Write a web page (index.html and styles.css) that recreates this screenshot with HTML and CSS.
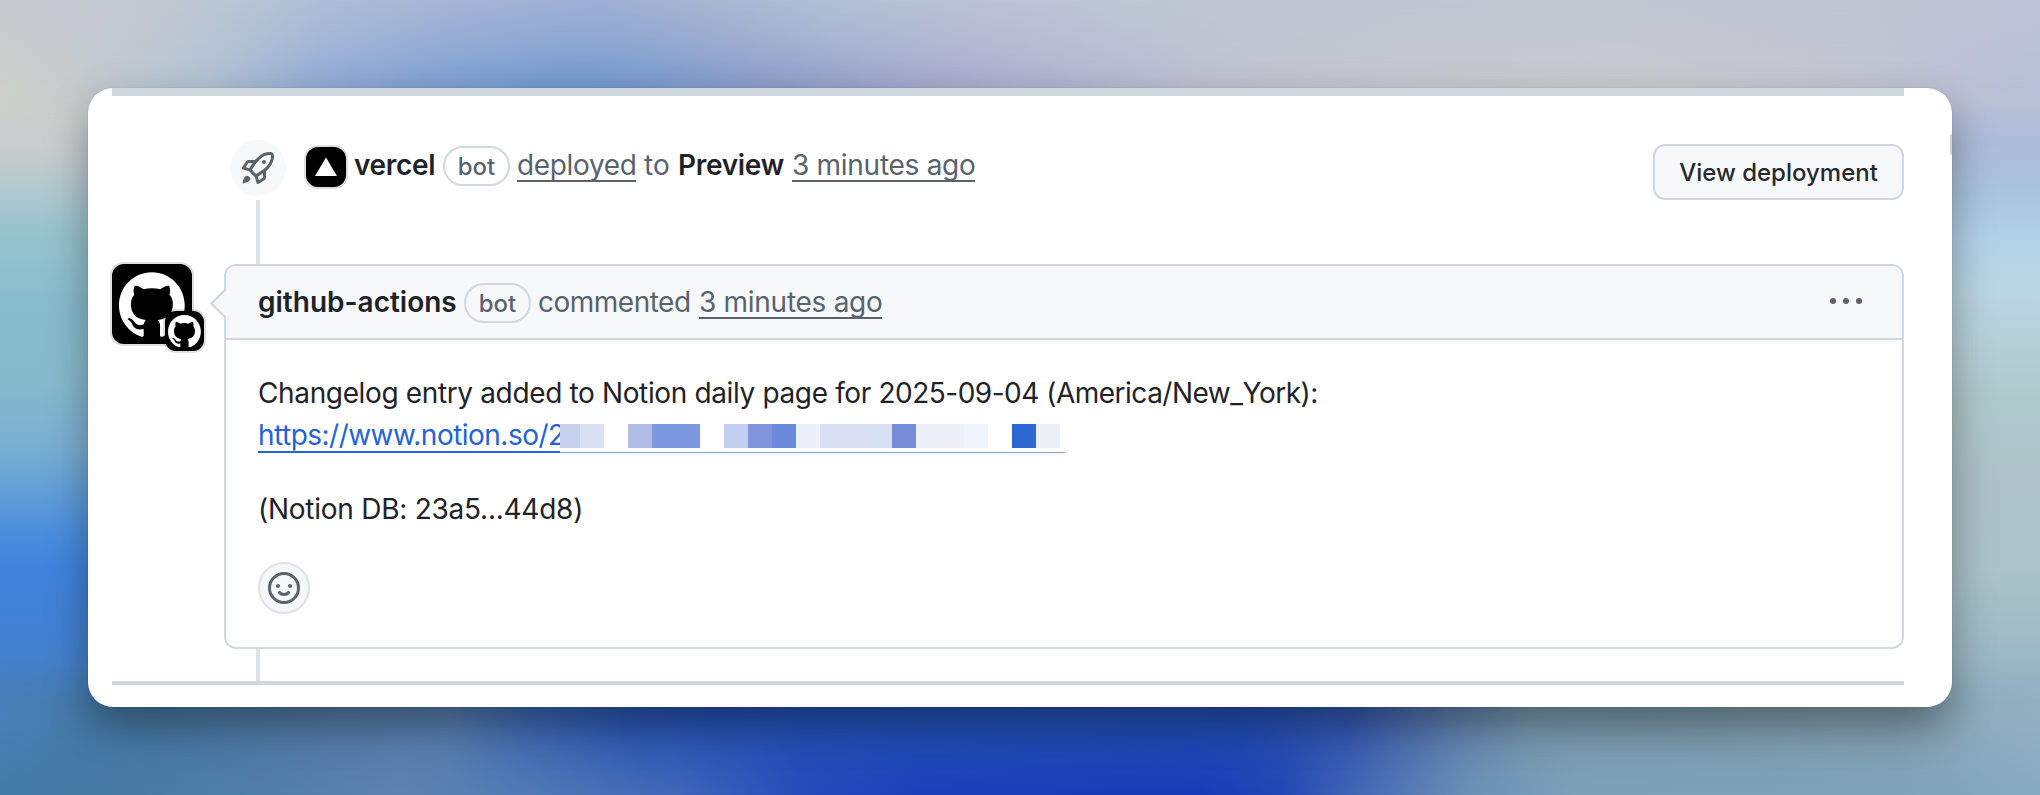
FILE: index.html
```html
<!DOCTYPE html>
<html lang="en">
<head>
<meta charset="utf-8">
<title>Deployment activity</title>
<link rel="stylesheet" href="styles.css">
</head>
<body>
<svg class="defs" width="0" height="0" aria-hidden="true">
  <symbol id="mark" viewBox="0 0 98 96"><path d="M48.854 0C21.839 0 0 22 0 49.217c0 21.756 13.993 40.172 33.405 46.69 2.427.49 3.316-1.059 3.316-2.362 0-1.141-.08-5.052-.08-9.127-13.59 2.934-16.42-5.867-16.42-5.867-2.184-5.704-5.42-7.17-5.42-7.17-4.448-3.015.324-3.015.324-3.015 4.934.326 7.523 5.052 7.523 5.052 4.367 7.496 11.404 5.378 14.235 4.074.404-3.178 1.699-5.378 3.074-6.6-10.839-1.141-22.243-5.378-22.243-24.283 0-5.378 1.94-9.778 5.014-13.2-.485-1.222-2.184-6.275.486-13.038 0 0 4.125-1.304 13.426 5.052a46.97 46.97 0 0 1 12.214-1.63c4.125 0 8.33.571 12.213 1.63 9.302-6.356 13.427-5.052 13.427-5.052 2.67 6.763.97 11.816.485 13.038 3.155 3.422 5.015 7.822 5.015 13.2 0 18.905-11.404 23.06-22.324 24.283 1.78 1.548 3.316 4.481 3.316 9.126 0 6.6-.08 11.897-.08 13.526 0 1.304.89 2.853 3.316 2.364 19.412-6.52 33.405-24.935 33.405-46.691C97.707 22 75.788 0 48.854 0z"/></symbol>
</svg>
<div class="wallpaper">
  <div class="side side-left"></div>
  <div class="side side-right"></div>
  <div class="edge edge-top"></div>
  <div class="edge edge-top-inner"></div>
  <div class="edge edge-bottom"></div>
  <div class="edge edge-bottom-outer"></div>
</div>
<main class="card">
  <div class="rule rule-top"></div>
  <section class="event">
    <div class="badge">
      <svg width="32" height="32" viewBox="0 0 16 16"><path d="M14.064 0h.186C15.216 0 16 .784 16 1.75v.186a8.752 8.752 0 0 1-2.564 6.186l-.458.459c-.314.314-.641.616-.979.904v3.207c0 .608-.315 1.172-.833 1.49l-2.774 1.707a.749.749 0 0 1-1.11-.418l-.954-3.102a1.214 1.214 0 0 1-.145-.125L3.754 9.816a1.218 1.218 0 0 1-.124-.145L.528 8.717a.749.749 0 0 1-.418-1.11l1.71-2.774A1.748 1.748 0 0 1 3.31 4h3.204c.288-.338.59-.665.904-.979l.459-.458A8.749 8.749 0 0 1 14.064 0ZM8.938 3.623h-.002l-.458.458c-.76.76-1.437 1.598-2.02 2.5l-1.5 2.317 2.143 2.143 2.317-1.5c.902-.583 1.74-1.26 2.499-2.02l.459-.458a7.25 7.25 0 0 0 2.123-5.127V1.75a.25.25 0 0 0-.25-.25h-.186a7.249 7.249 0 0 0-5.125 2.123ZM3.56 14.56c-.732.732-2.334 1.045-3.005 1.148a.234.234 0 0 1-.201-.064.234.234 0 0 1-.064-.201c.103-.671.416-2.273 1.15-3.003a1.502 1.502 0 1 1 2.12 2.12Zm6.94-3.935c-.088.06-.177.118-.266.175l-2.35 1.521.548 1.783 1.949-1.2a.25.25 0 0 0 .119-.213ZM3.678 8.116 5.2 5.766c.058-.09.117-.178.176-.266H3.309a.25.25 0 0 0-.213.119l-1.2 1.95ZM12 5a1 1 0 1 1-2 0 1 1 0 0 1 2 0Z"/></svg>
    </div>
    <div class="event-line">
      <span class="vercel"><svg width="40" height="40" viewBox="0 0 40 40"><path d="M20 10.5 31 29H9Z"/></svg></span>
      <b class="w-vercel">vercel</b>
      <span class="pill">bot</span>
      <a class="ul w-deployed">deployed</a>
      <span class="w-to">to</span>
      <b class="w-preview">Preview</b>
      <a class="ul w-ago">3 minutes ago</a>
    </div>
    <button class="btn">View deployment</button>
  </section>
  <div class="stem stem-top"></div>
  <section class="comment-row">
    <div class="avatar">
      <svg class="avatar-mark" width="66" height="65"><use href="#mark"/></svg>
      <div class="avatar-small"><svg width="33" height="32.5"><use href="#mark"/></svg></div>
    </div>
    <article class="comment">
      <svg class="caret" width="17" height="32" viewBox="0 0 17 32"><path class="caret-fill" d="M17 1 2 16l15 15Z"/><path class="caret-line" d="M15.5 1.5 1.5 15.5l14 14"/></svg>
      <header class="comment-head">
        <b class="w-actions">github-actions</b>
        <span class="pill">bot</span>
        <span class="w-commented">commented</span>
        <a class="ul w-ago">3 minutes ago</a>
        <svg class="kebab" width="32" height="32" viewBox="0 0 32 32"><circle cx="3" cy="16" r="3"/><circle cx="16" cy="16" r="3"/><circle cx="29" cy="16" r="3"/></svg>
      </header>
      <div class="comment-body">
        <p class="t-line">Changelog entry added to Notion daily page for <span class="t-date">2025-09-04 (America/New_York):</span></p>
        <p class="link-line"><a class="link">https://www.notion.so/2</a><span class="mosaic"><i class="m1"></i><i class="m2"></i><i></i><i class="m3"></i><i class="m4"></i><i class="m4"></i><i></i><i class="m5"></i><i class="m6"></i><i class="m7"></i><i class="m8"></i><i class="m9"></i><i class="m9"></i><i class="m10"></i><i class="m11"></i><i class="m12"></i><i class="m12"></i><i class="m13"></i><i></i><i class="m14"></i><i class="m15"></i></span></p>
        <p class="t-db">(Notion DB: 23a5...44d8)</p>
        <div class="react"><svg width="32" height="32" viewBox="0 0 16 16"><circle class="face" cx="8" cy="8" r="7.25"/><circle cx="5" cy="7" r="1"/><circle cx="11" cy="7" r="1"/><path class="smile" d="M5.75 10.25c1 1.35 3.5 1.35 4.5 0"/></svg></div>
      </div>
    </article>
  </section>
  <div class="stem stem-bottom"></div>
  <div class="rule rule-bottom"></div>
  <div class="nub"></div>
</main>
</body>
</html>
```
FILE: styles.css
```css
* { box-sizing: border-box; }
html { height: 795px; overflow: hidden; }
body {
  margin: 0; width: 2040px; height: 795px; overflow: hidden; position: relative;
  padding: 88px; font-family: Inter, "Liberation Sans", sans-serif; font-size: 28px; color: #1f2328;
}
.defs { position: absolute; }
p { margin: 0; }

/* wallpaper: blurred colour fields around the card */
.wallpaper { position: absolute; inset: 0; overflow: hidden; }
.side { position: absolute; top: 0; bottom: 0; width: 1020px; }
.side-left {
  left: 0;
  background: linear-gradient(180deg, #c9cccf 0, #cfcfcd 100px, #c6ccce 155px, #96c2cd 235px, #89bccc 300px, #86b9cc 385px, #78aed2 450px, #4a8ddd 535px, #3f83dd 570px, #4380cf 645px, #477eb8 720px, #447aa6 795px);
}
.side-right {
  right: 0;
  background: linear-gradient(180deg, #bcc4d4 0, #bac1d5 90px, #adbbd9 145px, #a8c5df 195px, #b2d2e7 240px, #bad6e3 290px, #b7d0d8 340px, #afc8cc 400px, #acc2c8 480px, #abc2c9 570px, #9fbac4 640px, #94b2c2 700px, #86a9c0 795px);
}
.edge { position: absolute; left: 0; right: 0; }
.edge-top {
  top: 0; height: 110px;
  background: linear-gradient(90deg, #c7cacf 0, #c5cad2 130px, #b9c6d3 230px, #aebdd7 330px, #a6b4d6 460px, #9fb0d5 600px, #a8b5d2 700px, #b2c0d5 830px, #bcc3d5 1000px, #bcc7d3 1130px, #c0c7d3 1300px, #c2c7d3 1600px, #c0c5d3 1850px, #bcc4d4 2040px);
  -webkit-mask-image: linear-gradient(#000 70px, transparent 110px);
}
.edge-top-inner {
  top: 0; height: 120px;
  background: linear-gradient(90deg, #cecfcb 0, #c6cbcc 70px, #bdc8d0 130px, #b0c1d3 210px, #90aad6 320px, #7ca0d2 430px, #6e98ce 560px, #7599cd 650px, #909cca 790px, #a3a8cc 920px, #b1b2d0 1050px, #bfc1cf 1210px, #c7c8ce 1400px, #cbcbcd 1620px, #c7c7d0 1800px, #bbc1d5 1960px, #b7c0d6 2040px);
  -webkit-mask-image: linear-gradient(transparent 0, rgba(0,0,0,.33) 38px, #000 90px, #000 92px, transparent 120px);
}
.edge-bottom {
  bottom: 0; height: 130px;
  background: linear-gradient(90deg, #4a80b9 0, #457aa8 80px, #4777a2 160px, #547aa6 330px, #557cad 450px, #3b65b2 540px, #2854b2 640px, #2250b4 800px, #214fb4 1000px, #214db3 1240px, #3457b0 1350px, #5d7ead 1450px, #7898ac 1530px, #7c9aab 1700px, #839fad 1900px, #8eadbf 1990px, #92b0c2 2040px);
  -webkit-mask-image: linear-gradient(transparent 0, #000 42px);
}
.edge-bottom-outer {
  bottom: 0; height: 75px;
  background: linear-gradient(90deg, #447aa4 0, #487ba6 150px, #527ea8 280px, #5e84ae 400px, #5079b5 530px, #3f66b8 680px, #274cba 800px, #1a40b9 920px, #183cb8 1200px, #2246b4 1280px, #4468b4 1360px, #6b91b6 1470px, #7da1b9 1580px, #7fa2ba 1900px, #87a9c1 2040px);
  -webkit-mask-image: linear-gradient(transparent 0, #000 100%);
}

.card {
  position: relative; width: 1864px; height: 619px; padding: 0 48px 0 24px; border-radius: 25px;
  background: #fff; display: flex; flex-direction: column;
  box-shadow: 0 0 2px rgba(0,0,0,.1), 0 18px 40px rgba(0,0,0,.36);
}
.rule { flex: none; background: #d1d9e0; }
.rule-top { height: 8px; }
.rule-bottom { height: 4px; }
.stem { flex: none; width: 4px; margin-left: 144px; background: #dfe3e8; }
.stem-top { height: 64px; }
.stem-bottom { height: 32px; }
.nub { position: absolute; right: 0; top: 46px; width: 2px; height: 21px; background: #d3d3d1; border-radius: 2px 0 0 2px; }

.event { flex: none; height: 104px; padding-left: 118px; display: flex; align-items: flex-start; }
.badge {
  width: 56px; height: 56px; margin-top: 44px; border-radius: 50%; background: #f6f8fa;
  display: flex; align-items: center; justify-content: center; fill: #59636e;
}
.event-line { display: flex; align-items: flex-start; margin: 50px auto 0 20px; height: 42px; line-height: 40px; color: #59636e; white-space: nowrap; }
.event-line > b, .event-line > a, .event-line > span:not(.pill):not(.vercel) { margin-top: -1px; }
b { font-weight: 600; color: #1f2328; flex: none; }
.vercel { width: 40px; height: 40px; margin-top: 1px; border-radius: 12px; background: #000; box-shadow: 0 0 0 2px rgba(31,35,40,.15); fill: #fff; }
.vercel svg { display: block; }
.w-vercel { margin-left: 8px; width: 89px; letter-spacing: -.3px; }
.pill {
  flex: none; width: 67px; height: 40px; border: 2px solid #d1d9e0; border-radius: 20px;
  font-size: 24px; font-weight: 500; line-height: 37px; text-align: center; color: #59636e;
}
.ul { flex: none; border-bottom: 2px solid #59636e; height: 37px; }
.w-deployed { margin-left: 7px; width: 119px; letter-spacing: -.35px; }
.w-to { margin-left: 8px; width: 34px; }
.w-preview { width: 114px; letter-spacing: -.3px; }
.w-ago { width: 183px; letter-spacing: -.28px; }
.btn {
  flex: none; width: 251px; height: 56px; margin-top: 48px; padding: 0; border: 2px solid #d1d9e0; border-radius: 12px;
  background: #f6f8fa; color: #25292e; font: 500 24px Inter, "Liberation Sans", sans-serif; text-align: center;
}

.comment-row { flex: none; height: 385px; display: flex; }
.avatar { position: relative; width: 80px; height: 80px; margin-right: 32px; border-radius: 12px; background: #000; box-shadow: 0 0 0 2px rgba(31,35,40,.15); fill: #fff; }
.avatar-mark { display: block; margin: 8px 0 0 7px; }
.avatar-small {
  position: absolute; left: 53px; top: 47px; width: 39px; height: 40px; border-radius: 11px; background: #000;
  box-shadow: 0 0 0 2px rgba(31,35,40,.15); display: flex; align-items: center; justify-content: center;
}
.comment { position: relative; flex: 1; border: 2px solid #d1d9e0; border-radius: 12px; }
.caret { position: absolute; left: -16px; top: 22px; }
.caret-fill { fill: #f6f8fa; }
.caret-line { fill: none; stroke: #d1d9e0; stroke-width: 2.4; }
.comment-head {
  height: 74px; padding: 17px 40px 0 32px; display: flex; align-items: flex-start; line-height: 40px; color: #59636e; white-space: nowrap;
  background: #f6f8fa; border-bottom: 2px solid #d1d9e0; border-radius: 10px 10px 0 0;
}
.comment-head > b, .comment-head > a, .comment-head > span:not(.pill) { margin-top: -1px; }
.w-actions { width: 206px; }
.w-commented { margin-left: 7px; width: 161px; letter-spacing: -.5px; }
.kebab { margin: 2px 0 0 auto; fill: #59636e; }
.comment-body { padding: 32px 32px 0; line-height: 42px; white-space: nowrap; }
.t-line { letter-spacing: -.36px; }
.t-date { letter-spacing: -.5px; }
.link-line { display: flex; height: 42px; }
.link { flex: none; width: 302px; height: 39px; color: #2563d4; border-bottom: 2px solid #2563d4; letter-spacing: -.52px; }
.mosaic { position: relative; display: flex; width: 505px; height: 39px; padding-top: 10px; border-bottom: 1px solid #7ba0e6; }
.mosaic i { flex: none; width: 24px; height: 24px; background: #fefefe; }
.mosaic .m1 { width: 20px; background: #c7d0ed; }
.mosaic .m2 { background: #d8e0f3; }
.mosaic .m3 { background: #b1bde7; }
.mosaic .m4 { background: #7b98e0; }
.mosaic .m5 { background: #c3cff0; }
.mosaic .m6 { background: #8095dc; }
.mosaic .m7 { background: #6b89da; }
.mosaic .m8 { background: #ebf0fa; }
.mosaic .m9 { background: #d8dff3; }
.mosaic .m10 { background: #d5e0f3; }
.mosaic .m11 { background: #778dd9; }
.mosaic .m12 { background: #edf0f9; }
.mosaic .m13 { background: #eff4fc; }
.mosaic .m14 { background: #2c67d4; }
.mosaic .m15 { background: #ebeff8; }
.t-db { margin-top: 32px; letter-spacing: -.25px; }
.react {
  width: 52px; height: 52px; margin-top: 32px; border-radius: 50%; border: 2px solid #dfe3e8; background: #f6f8fa;
  display: flex; align-items: center; justify-content: center; fill: #59636e;
}
.face, .smile { fill: none; stroke: #59636e; stroke-width: 1.5; stroke-linecap: round; }
```
